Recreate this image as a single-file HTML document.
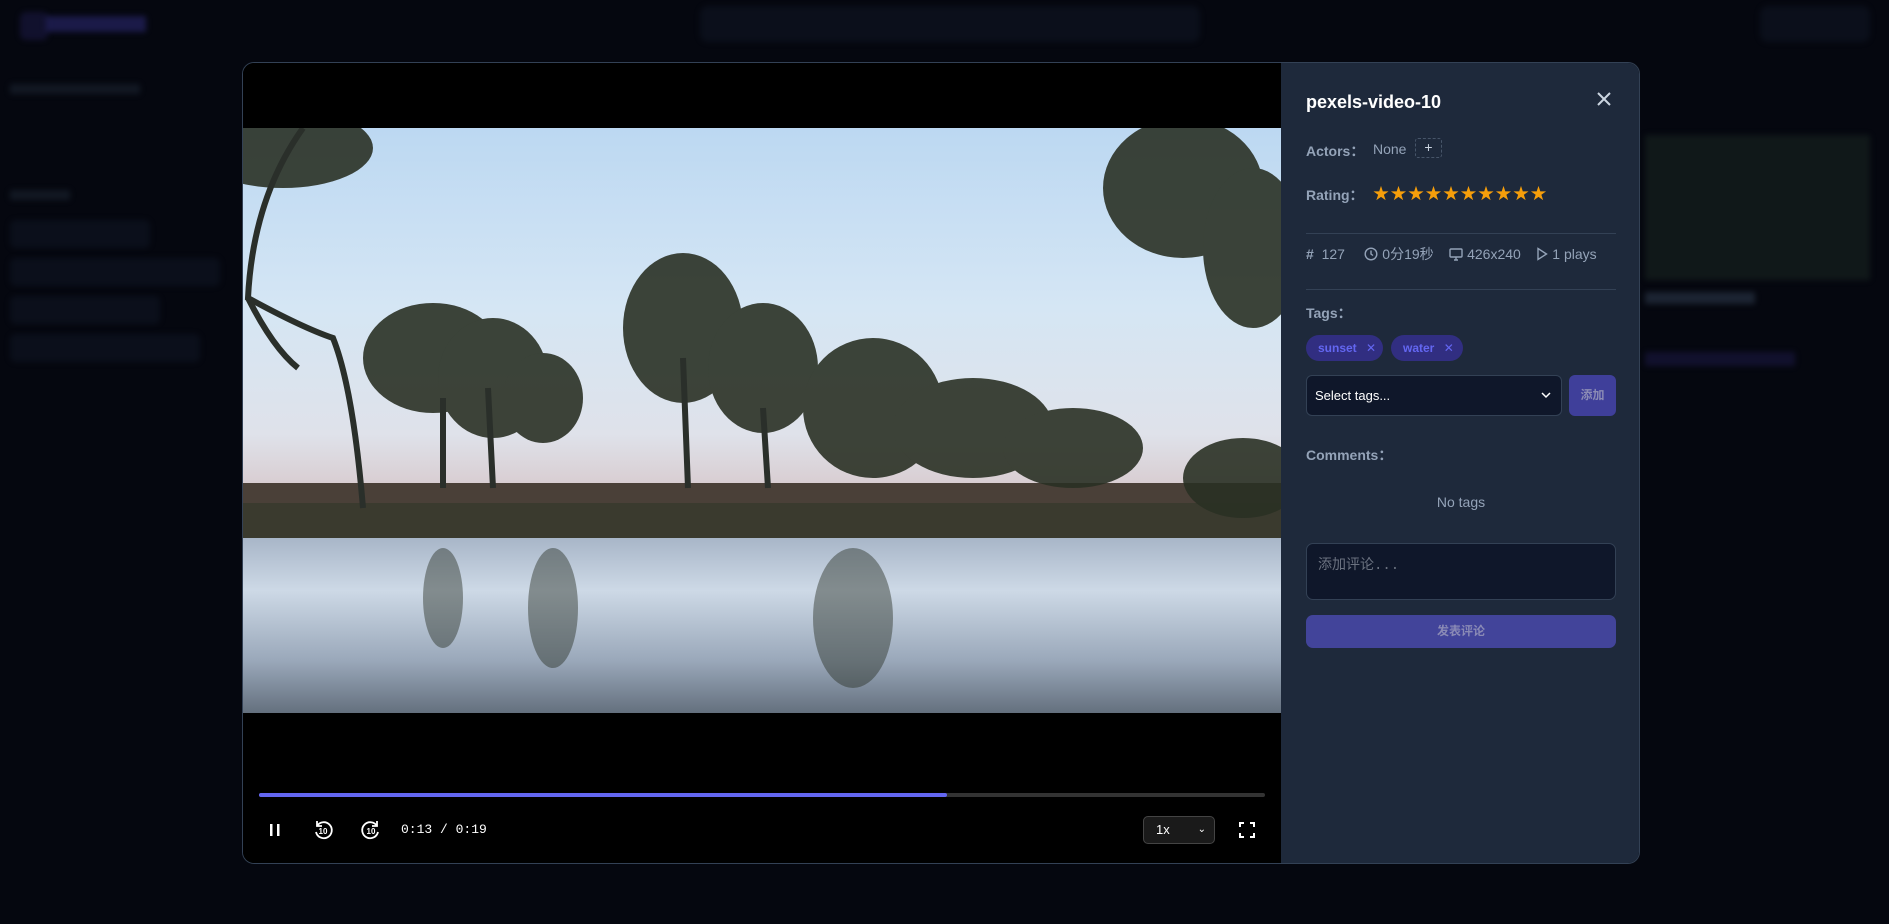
<!DOCTYPE html>
<html><head><meta charset="utf-8"><style>
*{box-sizing:border-box;margin:0;padding:0}
body{width:1889px;height:924px;overflow:hidden;background:#05070f;font-family:"Liberation Sans","Noto Sans CJK SC",sans-serif;position:relative}
.bg{position:absolute;filter:blur(3px);opacity:.5}
.modal{position:absolute;left:242px;top:62px;width:1398px;height:802px;border:1px solid #334155;border-radius:12px;overflow:hidden;background:#000}
.video{position:absolute;left:0;top:0;width:1038px;height:802px;background:#000}
.panel{position:absolute;left:1038px;top:0;width:360px;height:802px;background:#1e293b;color:#cbd5e1}
.lbl{color:#94a3b8;font-weight:bold;font-size:14px}
.abs{position:absolute}
.chip{position:absolute;top:272px;height:26px;border-radius:13px;background:#312e81;color:#6366f1;font-size:12px;font-weight:bold;line-height:26px;padding-left:12px}
</style></head><body>
<div class="bg" style="left:20px;top:12px;width:28px;height:28px;border-radius:6px;background:#1e1b4b"></div>
<div class="bg" style="left:46px;top:16px;width:100px;height:16px;background:#312e81"></div>
<div class="bg" style="left:700px;top:6px;width:500px;height:36px;border-radius:8px;background:#111827"></div>
<div class="bg" style="left:1760px;top:6px;width:110px;height:36px;border-radius:8px;background:#111827"></div>
<div class="bg" style="left:10px;top:84px;width:130px;height:10px;background:#1f2937"></div>
<div class="bg" style="left:10px;top:190px;width:60px;height:10px;background:#1f2937"></div>
<div class="bg" style="left:10px;top:220px;width:140px;height:28px;border-radius:6px;background:#111827"></div>
<div class="bg" style="left:10px;top:258px;width:210px;height:28px;border-radius:6px;background:#111827"></div>
<div class="bg" style="left:10px;top:296px;width:150px;height:28px;border-radius:6px;background:#111827"></div>
<div class="bg" style="left:10px;top:334px;width:190px;height:28px;border-radius:6px;background:#111827"></div>
<div class="bg" style="left:1645px;top:135px;width:225px;height:145px;background:#1c2a24"></div>
<div class="bg" style="left:1645px;top:292px;width:110px;height:12px;background:#334155"></div>
<div class="bg" style="left:1645px;top:352px;width:150px;height:14px;background:#1e1b4b"></div>

<div class="modal">
 <div class="video">
  <svg class="abs" style="left:0;top:65px" width="1038" height="585" viewBox="0 0 1038 585" preserveAspectRatio="none">
   <defs>
    <linearGradient id="sky" x1="0" y1="0" x2="0" y2="1">
     <stop offset="0" stop-color="#bcd8f2"/><stop offset=".5" stop-color="#d5e6f4"/><stop offset=".85" stop-color="#dfe2ea"/><stop offset="1" stop-color="#d8ccd0"/></linearGradient>
    <linearGradient id="wat" x1="0" y1="0" x2="0" y2="1">
     <stop offset="0" stop-color="#a8b6c8"/><stop offset=".3" stop-color="#cdd9e6"/><stop offset=".7" stop-color="#9aa8ba"/><stop offset="1" stop-color="#64707e"/></linearGradient>
   </defs>
   <rect width="1038" height="360" fill="url(#sky)"/>
   <rect y="355" width="1038" height="60" fill="#4a4038"/>
   <rect y="375" width="1038" height="40" fill="#3a3a2e"/>
   <rect y="410" width="1038" height="175" fill="url(#wat)"/>
   <g fill="#2a3024" opacity=".9">
    <ellipse cx="190" cy="230" rx="70" ry="55"/><ellipse cx="250" cy="250" rx="55" ry="60"/><ellipse cx="300" cy="270" rx="40" ry="45"/>
    <ellipse cx="440" cy="200" rx="60" ry="75"/><ellipse cx="520" cy="240" rx="55" ry="65"/>
    <ellipse cx="630" cy="280" rx="70" ry="70"/><ellipse cx="730" cy="300" rx="80" ry="50"/><ellipse cx="830" cy="320" rx="70" ry="40"/>
    <ellipse cx="940" cy="60" rx="80" ry="70"/><ellipse cx="1010" cy="120" rx="50" ry="80"/>
    <ellipse cx="40" cy="20" rx="90" ry="40"/><ellipse cx="1000" cy="350" rx="60" ry="40"/>
    <ellipse cx="310" cy="480" rx="25" ry="60" opacity=".5"/><ellipse cx="610" cy="490" rx="40" ry="70" opacity=".5"/><ellipse cx="200" cy="470" rx="20" ry="50" opacity=".5"/>
   </g>
   <g stroke="#2a2f2a" stroke-width="6" fill="none">
    <path d="M60 0 Q10 70 5 170 Q60 200 90 210 Q110 260 120 380"/><path d="M5 170 Q30 220 55 240"/>
    <path d="M200 270 L200 360M245 260 L250 360M440 230 L445 360M520 280 L525 360"/>
   </g>
  </svg>
  <div class="abs" style="left:16px;top:730px;width:1006px;height:4px;background:#333;border-radius:2px"></div>
  <div class="abs" style="left:16px;top:730px;width:688px;height:4px;background:#6366f1;border-radius:2px"></div>
  <svg class="abs" style="left:20px;top:755px" width="24" height="24" viewBox="0 0 24 24"><rect x="7" y="6" width="2.5" height="12" fill="#fff"/><rect x="14" y="6" width="2.5" height="12" fill="#fff"/></svg>
  <svg class="abs" style="left:68px;top:755px" width="24" height="24" viewBox="0 0 24 24" fill="none" stroke="#fff" stroke-width="1.8"><path d="M6 8 A8 8 0 1 1 5 14"/><path d="M6 3 V8 H11"/><text x="12" y="16" font-size="8" fill="#fff" stroke="none" text-anchor="middle" font-weight="bold" font-family="Liberation Sans">10</text></svg>
  <svg class="abs" style="left:116px;top:755px" width="24" height="24" viewBox="0 0 24 24" fill="none" stroke="#fff" stroke-width="1.8"><path d="M18 8 A8 8 0 1 0 19 14"/><path d="M18 3 V8 H13"/><text x="12" y="16" font-size="8" fill="#fff" stroke="none" text-anchor="middle" font-weight="bold" font-family="Liberation Sans">10</text></svg>
  <div class="abs" style="left:158px;top:759px;color:#fff;font-family:'Liberation Mono',monospace;font-size:13px">0:13 / 0:19</div>
  <div class="abs" style="left:900px;top:753px;width:72px;height:28px;border:1px solid #444;border-radius:5px;background:#1a1a1a;color:#fff;font-size:13px;line-height:26px;padding-left:12px">1x<span style="position:absolute;right:8px;font-size:10px">&#8964;</span></div>
  <svg class="abs" style="left:994px;top:757px" width="20" height="20" viewBox="0 0 20 20" fill="none" stroke="#fff" stroke-width="2"><path d="M3 7V3H7M13 3H17V7M17 13V17H13M7 17H3V13"/></svg>
 </div>
 <div class="panel">
  <div class="abs" style="left:25px;top:29px;font-size:18px;font-weight:bold;color:#fff">pexels-video-10</div>
  <svg class="abs" style="left:314px;top:27px" width="18" height="18" viewBox="0 0 18 18" stroke="#cbd5e1" stroke-width="2"><path d="M3 3L15 15M15 3L3 15"/></svg>
  <div class="abs lbl" style="left:25px;top:78px">Actors：</div>
  <div class="abs" style="left:92px;top:78px;font-size:14px;color:#94a3b8">None</div>
  <div class="abs" style="left:134px;top:75px;width:27px;height:20px;border:1px dashed #475569;border-radius:3px;color:#cbd5e1;font-size:14px;text-align:center;line-height:17px">+</div>
  <div class="abs lbl" style="left:25px;top:122px">Rating：</div>
  <div class="abs" style="left:92px;top:117px;color:#f59e0b;font-size:16px;letter-spacing:1.5px">★★★★★★★★★★</div>
  <div class="abs" style="left:25px;top:170px;width:310px;height:1px;background:#334155"></div>
  <div class="abs" style="left:25px;top:181px;font-size:14px;color:#94a3b8;white-space:nowrap;line-height:20px">
   <span style="font-weight:bold">#</span>&nbsp; 127 &nbsp;&nbsp;&nbsp;
   <svg width="14" height="14" viewBox="0 0 14 14" fill="none" stroke="#94a3b8" stroke-width="1.4" style="vertical-align:-2px"><circle cx="7" cy="7" r="5.8"/><path d="M7 3.5V7L9 8.5"/></svg> 0分19秒 &nbsp;&nbsp;
   <svg width="14" height="14" viewBox="0 0 14 14" fill="none" stroke="#94a3b8" stroke-width="1.4" style="vertical-align:-2px"><rect x="1" y="2" width="12" height="8" rx="1"/><path d="M5 13H9M7 10V13"/></svg> 426x240 &nbsp;&nbsp;
   <svg width="12" height="14" viewBox="0 0 12 14" fill="none" stroke="#94a3b8" stroke-width="1.4" style="vertical-align:-2px"><path d="M2 1.5L10.5 7L2 12.5Z"/></svg> 1 plays</div>
  <div class="abs" style="left:25px;top:226px;width:310px;height:1px;background:#334155"></div>
  <div class="abs lbl" style="left:25px;top:240px">Tags：</div>
  <div class="chip" style="left:25px;width:77px">sunset <span style="font-weight:normal;margin-left:6px">✕</span></div>
  <div class="chip" style="left:110px;width:72px">water <span style="font-weight:normal;margin-left:6px">✕</span></div>
  <div class="abs" style="left:25px;top:312px;width:256px;height:41px;background:#0f172a;border:1px solid #334155;border-radius:6px;color:#fff;font-size:13px;line-height:39px;padding-left:8px">Select tags...<svg class="abs" style="right:10px;top:15px" width="10" height="8" viewBox="0 0 10 8" fill="none" stroke="#fff" stroke-width="1.5"><path d="M1 2L5 6L9 2"/></svg></div>
  <div class="abs" style="left:288px;top:312px;width:47px;height:41px;background:#3f3f9a;border-radius:6px;color:#8b8bb5;font-size:12px;font-weight:bold;text-align:center;line-height:41px">添加</div>
  <div class="abs lbl" style="left:25px;top:382px">Comments：</div>
  <div class="abs" style="left:0;top:431px;width:360px;text-align:center;font-size:14px;color:#94a3b8">No tags</div>
  <div class="abs" style="left:25px;top:480px;width:310px;height:57px;background:#0f172a;border:1px solid #334155;border-radius:7px;color:#6b7280;font-size:14px;padding:10px 11px;font-family:'Liberation Mono','Noto Sans CJK SC',monospace">添加评论...</div>
  <div class="abs" style="left:25px;top:552px;width:310px;height:33px;background:#42449a;border-radius:7px;color:#8a8ab5;font-size:12px;font-weight:bold;text-align:center;line-height:33px">发表评论</div>
 </div>
</div>
</body></html>
